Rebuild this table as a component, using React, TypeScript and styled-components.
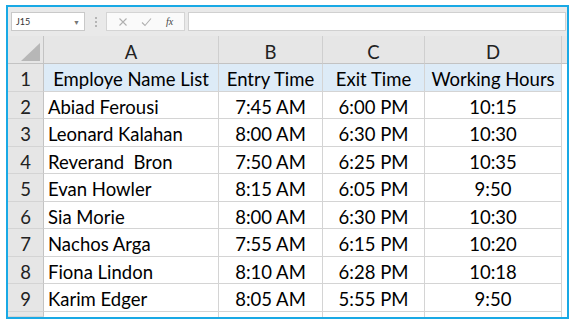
import * as React from "react";
import styled, { createGlobalStyle } from "styled-components";

const GlobalStyle = createGlobalStyle`
  html, body { margin: 0; padding: 0; background: #ffffff; }
  * { box-sizing: border-box; }
`;

const FONT = "Lato, 'Open Sans', sans-serif";

const rows = [
  ["Abiad Ferousi", "7:45 AM", "6:00 PM", "10:15"],
  ["Leonard Kalahan", "8:00 AM", "6:30 PM", "10:30"],
  ["Reverand\u00a0 Bron", "7:50 AM", "6:25 PM", "10:35"],
  ["Evan Howler", "8:15 AM", "6:05 PM", "9:50"],
  ["Sia Morie", "8:00 AM", "6:30 PM", "10:30"],
  ["Nachos Arga", "7:55 AM", "6:15 PM", "10:20"],
  ["Fiona Lindon", "8:10 AM", "6:28 PM", "10:18"],
  ["Karim Edger", "8:05 AM", "5:55 PM", "9:50"],
];

const Frame = styled.div`
  margin: 5px 0 0 6px;
  width: 563px;
  height: 314px;
  border: 2px solid #19a9e5;
  background: #ffffff;
  display: flex;
  flex-direction: column;
  overflow: hidden;
`;

const Toolbar = styled.div`
  height: 29px;
  flex: none;
  background: #e9e9e9;
  display: flex;
  align-items: center;
  padding: 0 1px 0 3px;
`;

const NameBox = styled.div`
  width: 74px;
  height: 19px;
  background: #fff;
  border: 1px solid #c9c9c9;
  display: flex;
  align-items: center;
  justify-content: space-between;
  padding: 0 4px 0 4px;
  font-family: ${FONT};
  font-size: 9px;
  color: #333;
`;

const Caret = styled.span`
  font-size: 7px;
  color: #777;
`;

const Grip = styled.div`
  width: 2px;
  height: 11px;
  margin: 0 9px 0 10px;
  background-image: radial-gradient(circle, #b5b5b5 0.9px, transparent 1px);
  background-size: 2px 4px;
`;

const FxBox = styled.div`
  width: 79px;
  height: 19px;
  background: #fafafa;
  border: 1px solid #d4d4d4;
  display: flex;
  align-items: center;
  justify-content: space-around;
  padding: 0 4px;
`;

const FxLabel = styled.span`
  font-family: "Liberation Serif", serif;
  font-style: italic;
  font-size: 10px;
  color: #444;
`;

const Formula = styled.div`
  flex: 1;
  height: 19px;
  margin-left: 3px;
  background: #fff;
  border: 1px solid #d0d0d0;
`;

const Sheet = styled.div`
  flex: 1;
  display: grid;
  grid-template-columns: 36px 175px 104px 102px 137px 1fr;
  grid-template-rows: 28px repeat(9, 27.5px) 1fr;
  font-family: ${FONT};
  font-size: 18.5px;
  color: #000;
`;

const Corner = styled.div`
  background: #e6e6e6;
  border-right: 1px solid #c3c3c3;
  border-bottom: 1px solid #c3c3c3;
  position: relative;
  &::after {
    content: "";
    position: absolute;
    right: 3px;
    bottom: 2px;
    width: 0;
    height: 0;
    border-left: 19px solid transparent;
    border-bottom: 18px solid #b7b7b7;
  }
`;

const ColHead = styled.div<{ $last?: boolean }>`
  background: #e6e6e6;
  border-right: ${(p) => (p.$last ? "none" : "1px solid #cfcfcf")};
  border-bottom: 1px solid #c3c3c3;
  display: flex;
  align-items: flex-end;
  justify-content: center;
  padding-bottom: 0;
  color: #222;
`;

const RowHead = styled.div`
  background: #e6e6e6;
  border-right: 1px solid #c3c3c3;
  border-bottom: 1px solid #d4d4d4;
  display: flex;
  align-items: center;
  justify-content: center;
  padding-top: 4px;
  color: #222;
`;

const Cell = styled.div<{ $left?: boolean; $title?: boolean }>`
  background: ${(p) => (p.$title ? "#ddebf7" : "#ffffff")};
  border-right: 1px solid #d4d4d4;
  border-bottom: 1px solid #d4d4d4;
  display: flex;
  align-items: center;
  justify-content: ${(p) => (p.$left ? "flex-start" : "center")};
  padding: 4px 4px 0;
  white-space: pre;
  overflow: hidden;
`;

const Blank = styled.div`
  background: #fff;
`;

const LastRow = styled.div`
  background: #fff;
  border-right: 1px solid #d4d4d4;
`;

const Cross = () => (
  <svg width="10" height="10" viewBox="0 0 10 10">
    <path d="M1.5 1.5 L8.5 8.5 M8.5 1.5 L1.5 8.5" stroke="#b0b0b0" strokeWidth="1.1" fill="none" />
  </svg>
);

const Check = () => (
  <svg width="11" height="10" viewBox="0 0 11 10">
    <path d="M1 5.5 L4 8.5 L10 1.5" stroke="#b0b0b0" strokeWidth="1.1" fill="none" />
  </svg>
);

export default function App() {
  const cols = ["A", "B", "C", "D"];
  return (
    <>
      <GlobalStyle />
      <Frame>
        <Toolbar>
          <NameBox>
            <span>J15</span>
            <Caret>▼</Caret>
          </NameBox>
          <Grip />
          <FxBox>
            <Cross />
            <Check />
            <FxLabel>fx</FxLabel>
          </FxBox>
          <Formula />
        </Toolbar>
        <Sheet>
          <Corner />
          {cols.map((c) => (
            <ColHead key={c}>{c}</ColHead>
          ))}
          <ColHead $last />

          <RowHead>1</RowHead>
          <Cell $title>Employe Name List</Cell>
          <Cell $title>Entry Time</Cell>
          <Cell $title>Exit Time</Cell>
          <Cell $title>Working Hours</Cell>
          <Blank />

          {rows.map((r, i) => (
            <React.Fragment key={i}>
              <RowHead>{i + 2}</RowHead>
              <Cell $left>{r[0]}</Cell>
              <Cell>{r[1]}</Cell>
              <Cell>{r[2]}</Cell>
              <Cell>{r[3]}</Cell>
              <Blank />
            </React.Fragment>
          ))}

          <RowHead />
          <LastRow />
          <LastRow />
          <LastRow />
          <LastRow />
          <Blank />
        </Sheet>
      </Frame>
    </>
  );
}
